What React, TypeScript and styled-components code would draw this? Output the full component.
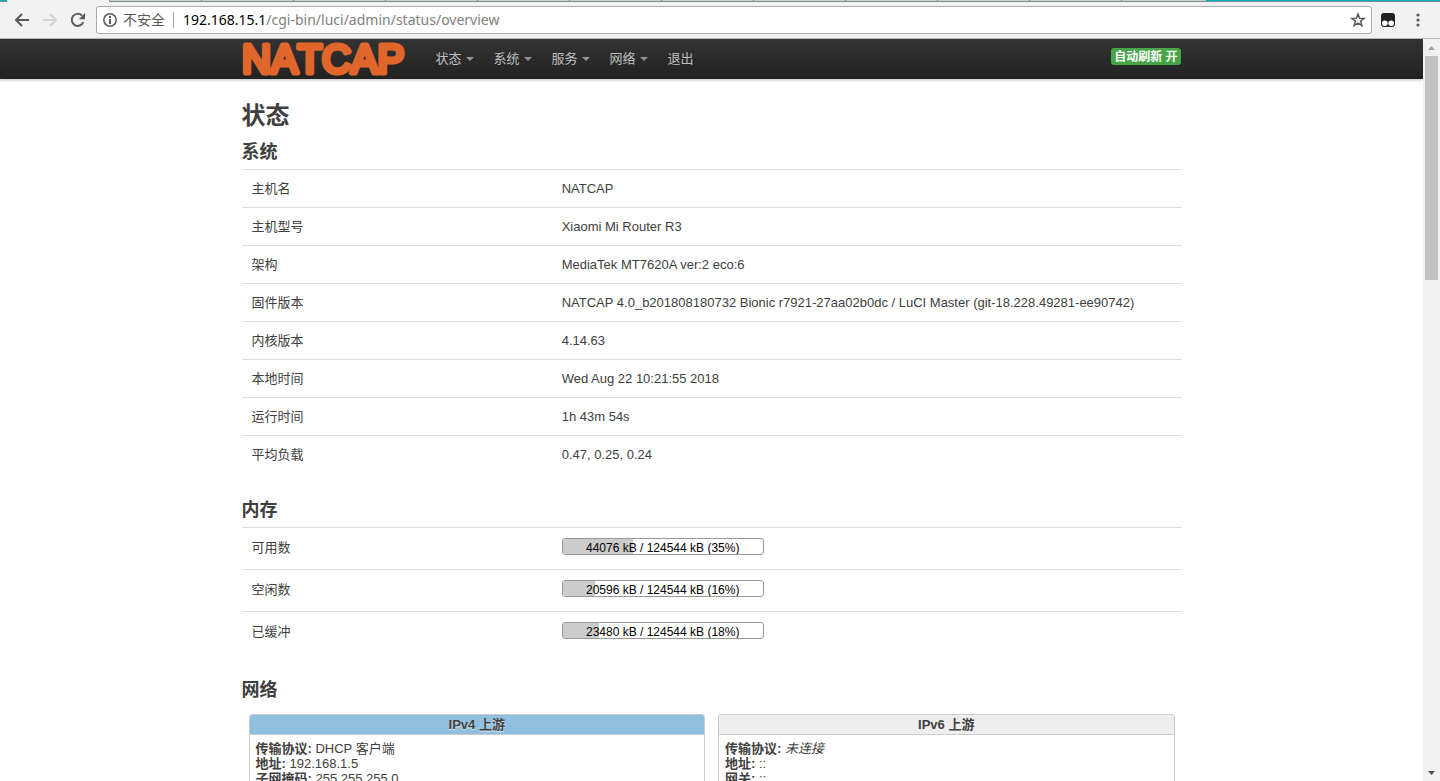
import React from 'react';
import styled, { createGlobalStyle } from 'styled-components';

const GlobalStyle = createGlobalStyle`
  * { box-sizing: border-box; }
  body {
    margin: 0;
    background: #fff;
    color: #404040;
    font-family: "Liberation Sans", "Noto Sans CJK SC", sans-serif;
    font-size: 13px;
    line-height: 18px;
  }
  button { font: inherit; border: 0; padding: 0; background: none; }
`;

const Window = styled.div`
  display: flex;
  flex-direction: column;
  height: 100vh;
  overflow: hidden;
`;

const TabStrip = styled.div`
  display: flex;
  flex: none;
  height: 2px;
  padding: 0 0 0 7px;
  background: #00b2bf;
  border-bottom: 1px solid #78898b;
`;
const ActiveTab = styled.div`
  width: 102px;
  height: 2px;
  background: #f2f2f2;
`;
const Tab = styled.div`
  flex: none;
  width: 92px;
  background: #d0d0d0;
  border-left: 1px solid #8e8e8e;
  &:last-child { width: 85px; }
`;

const Toolbar = styled.div`
  display: flex;
  flex: none;
  align-items: center;
  height: 37px;
  padding: 0 9px 0 12px;
  background: #f2f2f2;
  border-bottom: 1px solid #b4b4b6;
`;
const ToolButton = styled.button<{ $width?: number }>`
  display: flex;
  flex: none;
  align-items: center;
  justify-content: center;
  width: ${(p) => p.$width ?? 28}px;
  height: 28px;
`;
const AddressBar = styled.div`
  display: flex;
  flex: 1;
  align-items: center;
  min-width: 0;
  height: 28px;
  margin-left: 8px;
  padding: 0 5px;
  background: #fff;
  border: 1px solid #a9a9a9;
  border-radius: 3px;
  font-family: "Noto Sans", "Noto Sans CJK SC", sans-serif;
  font-size: 14px;
`;
const Security = styled.button`
  display: flex;
  align-items: center;
  gap: 5px;
  color: #5a5a5a;
  padding-right: 8px;
  border-right: 1px solid #a6a6a6;
  line-height: 16px;
`;
const Url = styled.div`
  flex: 1;
  padding-left: 9px;
  color: #808080;
  white-space: nowrap;
  overflow: hidden;
`;
const Host = styled.span`
  color: #000;
`;

const Viewport = styled.div`
  display: flex;
  flex: 1;
  min-height: 0;
`;
const Page = styled.div`
  flex: 1;
  min-width: 0;
  overflow: hidden;
`;
const ScrollTrack = styled.div`
  display: flex;
  flex: none;
  flex-direction: column;
  align-items: center;
  width: 17px;
  background: #f1f1f1;
`;
const ScrollArrow = styled.button`
  display: flex;
  align-items: center;
  justify-content: center;
  width: 17px;
  height: 17px;
`;
const ScrollRail = styled.div`
  flex: 1;
  width: 13px;
`;
const ScrollThumb = styled.div`
  height: 31.7%;
  background: #c1c1c1;
`;

const Header = styled.header`
  height: 40px;
  background: linear-gradient(#333, #222);
  box-shadow: 0 1px 3px rgba(0, 0, 0, 0.25);
`;
const Container = styled.div`
  max-width: 940px;
  margin: 0 auto;
`;
const HeaderRow = styled(Container)`
  display: flex;
  height: 40px;
`;
const Brand = styled.a`
  display: block;
  width: 184px;
  height: 40px;
`;
const BrandName = styled.text`
  fill: #e0662c;
  stroke: #e0662c;
  stroke-width: 5px;
  stroke-linejoin: round;
  font-family: "Liberation Sans", sans-serif;
  font-size: 40px;
  font-kerning: none;
`;
const Menu = styled.nav`
  display: flex;
  flex: 1;
  align-items: center;
`;
const MenuLink = styled.a`
  display: flex;
  align-items: center;
  gap: 4px;
  padding: 0 10px;
  color: #bfbfbf;
  text-decoration: none;
`;
const Caret = styled.span`
  border: 4px solid transparent;
  border-top-color: #929292;
  border-bottom: 0;
`;
const RefreshBadge = styled.button`
  align-self: flex-start;
  height: 17px;
  margin: 9px 1px 0 0;
  padding: 0 3px;
  border-radius: 3px;
  background: #46a546;
  color: #fff;
  font-size: 12px;
  font-weight: 700;
  line-height: 18px;
`;

const Main = styled(Container)`
  padding-top: 18px;
`;
const Title = styled.h2`
  height: 36px;
  margin: 0;
  font-size: 24px;
  line-height: 38px;
`;
const Section = styled.section`
  margin-bottom: 18px;
`;
const SectionTitle = styled.h3`
  height: 36px;
  margin: 0;
  font-size: 18px;
  line-height: 38px;
`;
const Table = styled.table`
  width: 100%;
  table-layout: fixed;
  border-spacing: 0;
`;
const LabelCell = styled.th<{ $tall?: boolean }>`
  width: 33%;
  height: ${(p) => (p.$tall ? 42 : 38)}px;
  padding: ${(p) => (p.$tall ? '0 10px 2px' : '0 10px')};
  border-top: 1px solid #ddd;
  font-weight: 400;
  text-align: left;
`;
const ValueCell = styled.td`
  padding: 0 10px;
  border-top: 1px solid #ddd;
`;
const Meter = styled.div`
  position: relative;
  width: 202px;
  height: 17px;
  margin-bottom: 4px;
  border: 1px solid #999;
  border-radius: 3px;
  overflow: hidden;
`;
const MeterFill = styled.div`
  height: 100%;
  background: #ccc;
`;
const MeterText = styled.div`
  position: absolute;
  inset: 1px 0 0;
  color: #000;
  font-size: 12px;
  line-height: 16px;
  text-align: center;
`;

const Cards = styled.div`
  display: flex;
  gap: 13px;
  padding: 7px;
`;
const Card = styled.div`
  flex: 1;
  border: 1px solid #ccc;
  border-radius: 3px;
  overflow: hidden;
`;
const CardHead = styled.div<{ $active?: boolean }>`
  height: 20px;
  border-bottom: 1px solid #ccc;
  background: ${(p) => (p.$active ? '#90c0e0' : '#eee')};
  font-weight: 700;
  line-height: 19px;
  text-align: center;
  text-shadow: ${(p) => (p.$active ? '0 1px 1px rgba(255, 255, 255, 0.75)' : 'none')};
`;
const CardBody = styled.div`
  padding: 6px;
  line-height: 15px;
`;

const system = [
  ['主机名', 'NATCAP'],
  ['主机型号', 'Xiaomi Mi Router R3'],
  ['架构', 'MediaTek MT7620A ver:2 eco:6'],
  ['固件版本', 'NATCAP 4.0_b201808180732 Bionic r7921-27aa02b0dc / LuCI Master (git-18.228.49281-ee90742)'],
  ['内核版本', '4.14.63'],
  ['本地时间', 'Wed Aug 22 10:21:55 2018'],
  ['运行时间', '1h 43m 54s'],
  ['平均负载', '0.47, 0.25, 0.24'],
];

const memory = [
  { label: '可用数', used: 44076, percent: 35 },
  { label: '空闲数', used: 20596, percent: 16 },
  { label: '已缓冲', used: 23480, percent: 18 },
];
const totalMemory = 124544;

const menu = ['状态', '系统', '服务', '网络'];

const Arrow = ({ forward }: { forward?: boolean }) => (
  <svg width="16" height="16" viewBox="0 0 16 16" fill="none" stroke={forward ? '#d2d2d2' : '#5a5a5a'} strokeWidth="2">
    <path d={forward ? 'M1 8h13M8 2l6 6-6 6' : 'M15 8H2M8 2L2 8l6 6'} />
  </svg>
);

export default function App() {
  return (
    <Window>
      <GlobalStyle />
      <TabStrip>
        <ActiveTab />
        {Array.from({ length: 12 }, (_, i) => (
          <Tab key={i} />
        ))}
      </TabStrip>
      <Toolbar>
        <ToolButton $width={20} aria-label="后退"><Arrow /></ToolButton>
        <ToolButton $width={36} aria-label="前进"><Arrow forward /></ToolButton>
        <ToolButton $width={20} aria-label="重新加载">
          <svg width="16" height="16" viewBox="0 0 16 16">
            <path d="M13.3 10.2A6 6 0 1 1 12 3.6" fill="none" stroke="#5a5a5a" strokeWidth="2" />
            <path d="M15 1v6.2H8.8z" fill="#5a5a5a" />
          </svg>
        </ToolButton>
        <AddressBar>
          <Security>
            <svg width="16" height="16" viewBox="0 0 16 16">
              <circle cx="8" cy="8" r="6.2" fill="none" stroke="#5a5a5a" strokeWidth="1.5" />
              <path d="M8 4v2M8 7v5" stroke="#5a5a5a" strokeWidth="2" />
            </svg>
            不安全
          </Security>
          <Url>
            <Host>192.168.15.1</Host>/cgi-bin/luci/admin/status/overview
          </Url>
          <ToolButton $width={16} aria-label="添加书签">
            <svg width="16" height="16" viewBox="0 0 16 16">
              <path d="M8 2l1.6 4.2 4.6.2-3.6 2.8 1.3 4.4L8 11.1l-3.9 2.5 1.3-4.4L1.8 6.4l4.6-.2z" fill="none" stroke="#5a5a5a" strokeWidth="1.5" />
            </svg>
          </ToolButton>
        </AddressBar>
        <ToolButton $width={32} aria-label="扩展程序">
          <svg width="14" height="14" viewBox="0 0 14 14">
            <rect width="14" height="14" rx="3" fill="#222" />
            <circle cx="3.8" cy="10.3" r="2.8" fill="#fff" />
            <circle cx="10.2" cy="10.3" r="2.8" fill="#fff" />
          </svg>
        </ToolButton>
        <ToolButton $width={27} aria-label="菜单">
          <svg width="4" height="14" viewBox="0 0 4 14" fill="#5a5a5a">
            <circle cx="2" cy="2" r="1.6" />
            <circle cx="2" cy="7" r="1.6" />
            <circle cx="2" cy="12" r="1.6" />
          </svg>
        </ToolButton>
      </Toolbar>
      <Viewport>
        <Page>
          <Header>
            <HeaderRow>
              <Brand href="#" aria-label="NATCAP">
                <svg width="184" height="40" viewBox="0 0 184 40">
                  <BrandName x="0" y="34">NATCAP</BrandName>
                </svg>
              </Brand>
              <Menu>
                {menu.map((item) => (
                  <MenuLink key={item} href="#">
                    {item}
                    <Caret />
                  </MenuLink>
                ))}
                <MenuLink href="#">退出</MenuLink>
              </Menu>
              <RefreshBadge>自动刷新 开</RefreshBadge>
            </HeaderRow>
          </Header>
          <Main as="main">
            <Title>状态</Title>
            <Section>
              <SectionTitle>系统</SectionTitle>
              <Table>
                <tbody>
                  {system.map(([label, value]) => (
                    <tr key={label}>
                      <LabelCell scope="row">{label}</LabelCell>
                      <ValueCell>{value}</ValueCell>
                    </tr>
                  ))}
                </tbody>
              </Table>
            </Section>
            <Section>
              <SectionTitle>内存</SectionTitle>
              <Table>
                <tbody>
                  {memory.map(({ label, used, percent }) => (
                    <tr key={label}>
                      <LabelCell scope="row" $tall>{label}</LabelCell>
                      <ValueCell>
                        <Meter>
                          <MeterFill style={{ width: `${percent}%` }} />
                          <MeterText>{`${used} kB / ${totalMemory} kB (${percent}%)`}</MeterText>
                        </Meter>
                      </ValueCell>
                    </tr>
                  ))}
                </tbody>
              </Table>
            </Section>
            <Section>
              <SectionTitle>网络</SectionTitle>
              <Cards>
                <Card>
                  <CardHead $active>IPv4 上游</CardHead>
                  <CardBody>
                    <div><b>传输协议:</b> DHCP 客户端</div>
                    <div><b>地址:</b> 192.168.1.5</div>
                    <div><b>子网掩码:</b> 255.255.255.0</div>
                  </CardBody>
                </Card>
                <Card>
                  <CardHead>IPv6 上游</CardHead>
                  <CardBody>
                    <div><b>传输协议:</b> <em>未连接</em></div>
                    <div><b>地址:</b> ::</div>
                    <div><b>网关:</b> ::</div>
                  </CardBody>
                </Card>
              </Cards>
            </Section>
          </Main>
        </Page>
        <ScrollTrack>
          <ScrollArrow aria-label="向上滚动">
            <svg width="7" height="4" viewBox="0 0 7 4"><path d="M0 4L3.5 0 7 4z" fill="#a3a3a3" /></svg>
          </ScrollArrow>
          <ScrollRail><ScrollThumb /></ScrollRail>
          <ScrollArrow aria-label="向下滚动">
            <svg width="7" height="4" viewBox="0 0 7 4"><path d="M0 0h7L3.5 4z" fill="#505050" /></svg>
          </ScrollArrow>
        </ScrollTrack>
      </Viewport>
    </Window>
  );
}
